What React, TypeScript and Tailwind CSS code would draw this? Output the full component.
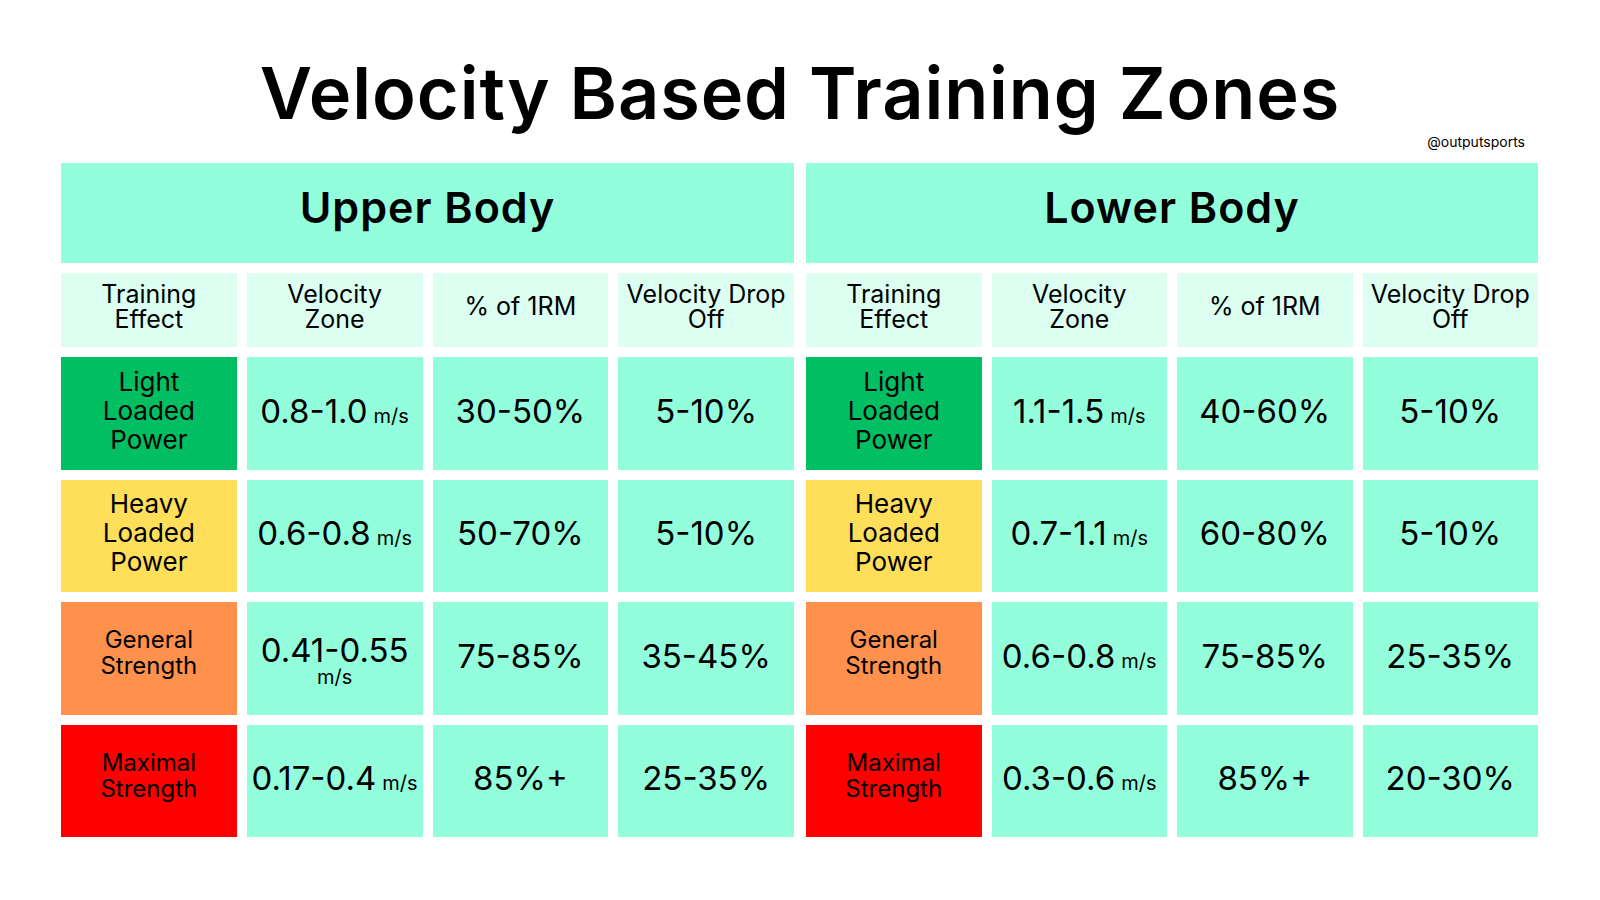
const MINT = "bg-[#93fedb]";
const PALE = "bg-[#dcfff2]";

type Row = {
  label: string[];
  tone: string;
  small?: boolean;
  zone: string;
  wrapUnit?: boolean;
  pct: string;
  drop: string;
};

const upper: Row[] = [
  { label: ["Light", "Loaded", "Power"], tone: "bg-[#00bf63]", zone: "0.8-1.0", pct: "30-50%", drop: "5-10%" },
  { label: ["Heavy", "Loaded", "Power"], tone: "bg-[#ffde59]", zone: "0.6-0.8", pct: "50-70%", drop: "5-10%" },
  { label: ["General", "Strength"], tone: "bg-[#ff914d]", small: true, zone: "0.41-0.55", wrapUnit: true, pct: "75-85%", drop: "35-45%" },
  { label: ["Maximal", "Strength"], tone: "bg-[#ff0000]", small: true, zone: "0.17-0.4", pct: "85%+", drop: "25-35%" },
];

const lower: Row[] = [
  { label: ["Light", "Loaded", "Power"], tone: "bg-[#00bf63]", zone: "1.1-1.5", pct: "40-60%", drop: "5-10%" },
  { label: ["Heavy", "Loaded", "Power"], tone: "bg-[#ffde59]", zone: "0.7-1.1", pct: "60-80%", drop: "5-10%" },
  { label: ["General", "Strength"], tone: "bg-[#ff914d]", small: true, zone: "0.6-0.8", pct: "75-85%", drop: "25-35%" },
  { label: ["Maximal", "Strength"], tone: "bg-[#ff0000]", small: true, zone: "0.3-0.6", pct: "85%+", drop: "20-30%" },
];

const heads = [["Training", "Effect"], ["Velocity", "Zone"], ["% of 1RM"], ["Velocity Drop", "Off"]];

function Lines({ lines }: { lines: string[] }) {
  return (
    <>
      {lines.map((l, i) => (
        <span key={i} className="block">
          {l}
        </span>
      ))}
    </>
  );
}

function Table({ title, rows, width }: { title: string; rows: Row[]; width: string }) {
  return (
    <div className={`grid grid-cols-4 gap-x-[10px] gap-y-[10px] grid-rows-[100px_74px_112.5px_112.5px_112.5px_112.5px] ${width}`}>
      <div className={`col-span-4 flex items-center justify-center pb-[12px] text-[43px] font-semibold tracking-[1px] ${MINT}`}>
        {title}
      </div>
      {heads.map((h, i) => (
        <div key={i} className={`flex items-center justify-center pb-[6px] text-center text-[25px] leading-[25.5px] ${PALE}`}>
          <div>
            <Lines lines={h} />
          </div>
        </div>
      ))}
      {rows.map((r, i) => (
        <div key={i} className="contents">
          <div
            className={`flex items-center justify-center text-center ${r.tone} ${
              r.small ? "pb-[10px] text-[24px] leading-[26px]" : "pb-[6px] text-[26px] leading-[29px]"
            }`}
          >
            <div>
              <Lines lines={r.label} />
            </div>
          </div>
          <div className={`flex items-center justify-center text-center ${MINT}`}>
            {r.wrapUnit ? (
              <div className="flex flex-col items-center pt-[6px]">
                <span className="text-[33px] leading-[31px]">{r.zone}</span>
                <span className="text-[20px] leading-[22px]">m/s</span>
              </div>
            ) : (
              <span className="whitespace-nowrap pb-[4px] text-[33px] leading-none">
                {r.zone}
                <span className="ml-[6px] text-[20px]">m/s</span>
              </span>
            )}
          </div>
          <div className={`flex items-center justify-center pb-[4px] text-[33px] ${MINT}`}>{r.pct}</div>
          <div className={`flex items-center justify-center pb-[4px] text-[33px] ${MINT}`}>{r.drop}</div>
        </div>
      ))}
    </div>
  );
}

export default function App() {
  return (
    <div className="h-[900px] w-[1600px] overflow-hidden bg-white text-black [font-family:Inter,'Liberation_Sans',sans-serif]">
      <h1 className="mt-[57px] h-[72px] text-center text-[72px] font-semibold leading-[72px] tracking-[0.9px]">
        Velocity Based Training Zones
      </h1>
      <div className="flex h-[34px] justify-end pr-[75px] pt-[3px] text-[14px] leading-[20px]">@outputsports</div>
      <div className="flex gap-[12px] pl-[61px]">
        <Table title="Upper Body" rows={upper} width="w-[733px]" />
        <Table title="Lower Body" rows={lower} width="w-[732px]" />
      </div>
    </div>
  );
}
